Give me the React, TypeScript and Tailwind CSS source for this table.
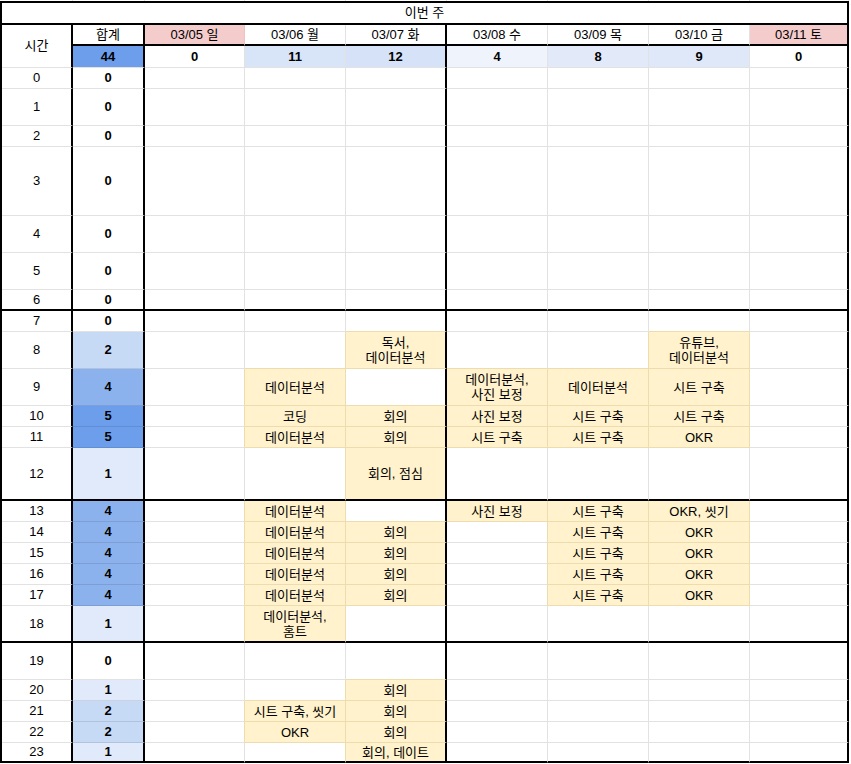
import React from 'react';

type Row = {
  h: string;
  label: string;
  total: number;
  cells: (string | null)[];
  thick?: boolean;
};

const E: (string | null)[] = [null, null, null, null, null, null, null];
const W14 = [null, '데이터분석', '회의', null, '시트 구축', 'OKR', null];

const rows: Row[] = [
  { h: 'h-[21px]', label: '0', total: 0, cells: E },
  { h: 'h-[37px]', label: '1', total: 0, cells: E },
  { h: 'h-[21px]', label: '2', total: 0, cells: E },
  { h: 'h-[69px]', label: '3', total: 0, cells: E },
  { h: 'h-[37px]', label: '4', total: 0, cells: E },
  { h: 'h-[37px]', label: '5', total: 0, cells: E },
  { h: 'h-[21px]', label: '6', total: 0, cells: E, thick: true },
  { h: 'h-[21px]', label: '7', total: 0, cells: E },
  { h: 'h-[37px]', label: '8', total: 2, cells: [null, null, '독서,\n데이터분석', null, null, '유튜브,\n데이터분석', null] },
  { h: 'h-[37px]', label: '9', total: 4, cells: [null, '데이터분석', null, '데이터분석,\n사진 보정', '데이터분석', '시트 구축', null] },
  { h: 'h-[21px]', label: '10', total: 5, cells: [null, '코딩', '회의', '사진 보정', '시트 구축', '시트 구축', null] },
  { h: 'h-[21px]', label: '11', total: 5, cells: [null, '데이터분석', '회의', '시트 구축', '시트 구축', 'OKR', null] },
  { h: 'h-[53px]', label: '12', total: 1, cells: [null, null, '회의, 점심', null, null, null, null], thick: true },
  { h: 'h-[21px]', label: '13', total: 4, cells: [null, '데이터분석', null, '사진 보정', '시트 구축', 'OKR, 씻기', null] },
  { h: 'h-[21px]', label: '14', total: 4, cells: W14 },
  { h: 'h-[21px]', label: '15', total: 4, cells: W14 },
  { h: 'h-[21px]', label: '16', total: 4, cells: W14 },
  { h: 'h-[21px]', label: '17', total: 4, cells: W14 },
  { h: 'h-[37px]', label: '18', total: 1, cells: [null, '데이터분석,\n홈트', null, null, null, null, null], thick: true },
  { h: 'h-[37px]', label: '19', total: 0, cells: E },
  { h: 'h-[21px]', label: '20', total: 1, cells: [null, null, '회의', null, null, null, null] },
  { h: 'h-[21px]', label: '21', total: 2, cells: [null, '시트 구축, 씻기', '회의', null, null, null, null] },
  { h: 'h-[21px]', label: '22', total: 2, cells: [null, 'OKR', '회의', null, null, null, null] },
  { h: 'h-[20px]', label: '23', total: 1, cells: [null, null, '회의, 데이트', null, null, null, null], thick: true },
];

const dayW = ['w-[100px]', 'w-[101px]', 'w-[101px]', 'w-[101px]', 'w-[101px]', 'w-[101px]', 'w-[99px]'];

const days = [
  { label: '03/05 일', total: 0, bg: 'bg-[#f4cccc]', tbg: 'bg-white' },
  { label: '03/06 월', total: 11, bg: 'bg-white', tbg: 'bg-[#d8e4f8]' },
  { label: '03/07 화', total: 12, bg: 'bg-white', tbg: 'bg-[#d5e2f7]' },
  { label: '03/08 수', total: 4, bg: 'bg-white', tbg: 'bg-[#eef3fc]' },
  { label: '03/09 목', total: 8, bg: 'bg-white', tbg: 'bg-[#e2eafa]' },
  { label: '03/10 금', total: 9, bg: 'bg-white', tbg: 'bg-[#dee8f9]' },
  { label: '03/11 토', total: 0, bg: 'bg-[#f4cccc]', tbg: 'bg-white' },
];

const totalBg: Record<number, string> = {
  0: 'bg-white',
  1: 'bg-[#e1eafa]',
  2: 'bg-[#c6d9f5]',
  4: 'bg-[#8cb2ee]',
  5: 'bg-[#6d9eeb]',
};

const cellBase = 'shrink-0 flex items-center justify-center text-center';

function dayRight(i: number, yellow: boolean, nextYellow: boolean) {
  if (i === 2 || i === 6) return 'border-r-2 border-r-black';
  if (yellow || nextYellow) return 'border-r border-r-[#ecdcae]';
  return 'border-r border-r-[#e2e2e2]';
}

function dayBottom(thick: boolean | undefined, yellow: boolean, belowYellow: boolean) {
  if (thick) return 'border-b-2 border-b-black';
  if (yellow || belowYellow) return 'border-b border-b-[#ecdcae]';
  return 'border-b border-b-[#e2e2e2]';
}

export default function App() {
  return (
    <div className="w-[851px] h-[764px] bg-white text-black text-[13px] font-['Liberation_Sans','Noto_Sans_CJK_KR',sans-serif] overflow-hidden">
      {/* 1px strip of the row above */}
      <div className="flex h-px pl-[2px]">
        <div className="w-[71px] shrink-0 border-r border-r-[#e2e2e2]" />
        <div className="w-[72px] shrink-0 border-r border-r-[#e2e2e2]" />
        {dayW.map((w, i) => (
          <div key={i} className={`${w} shrink-0 border-r border-r-[#e2e2e2]`} />
        ))}
      </div>
      <div className="w-[849px] border-l-2 border-t-2 border-black">
        {/* title */}
        <div className="h-[22px] flex items-center justify-center border-b-2 border-r-2 border-black">
          이번 주
        </div>
        {/* header block */}
        <div className="flex">
          <div className={`${cellBase} w-[71px] h-[43px] border-r-2 border-r-black border-b border-b-[#e2e2e2]`}>
            시간
          </div>
          <div className="flex flex-col">
            <div className="flex h-[21px]">
              <div className={`${cellBase} w-[72px] border-r-2 border-r-black border-b-2 border-b-black`}>합계</div>
              {days.map((d, i) => (
                <div
                  key={i}
                  className={`${cellBase} ${dayW[i]} ${d.bg} border-b-2 border-b-black ${
                    i === 2 || i === 6
                      ? 'border-r-2 border-r-black'
                      : i === 0
                      ? 'border-r border-r-[#ecc4c4]'
                      : 'border-r border-r-[#e2e2e2]'
                  }`}
                >
                  {d.label}
                </div>
              ))}
            </div>
            <div className="flex h-[22px] font-bold">
              <div className={`${cellBase} w-[72px] bg-[#6d9eeb] border-r-2 border-r-black border-b border-b-[#e2e2e2]`}>44</div>
              {days.map((d, i) => (
                <div
                  key={i}
                  className={`${cellBase} ${dayW[i]} ${d.tbg} border-b border-b-[#e2e2e2] ${
                    i === 2 || i === 6 ? 'border-r-2 border-r-black' : 'border-r border-r-[#e2e2e2]'
                  }`}
                >
                  {d.total}
                </div>
              ))}
            </div>
          </div>
        </div>
        {/* hour rows */}
        {rows.map((r, ri) => {
          const below = rows[ri + 1];
          return (
            <div key={r.label} className={`flex ${r.h}`}>
              <div
                className={`${cellBase} w-[71px] border-r-2 border-r-black ${
                  r.thick ? 'border-b-2 border-b-black' : 'border-b border-b-[#e2e2e2]'
                }`}
              >
                {r.label}
              </div>
              <div
                className={`${cellBase} w-[72px] font-bold ${totalBg[r.total]} border-r-2 border-r-black ${
                  r.thick
                    ? 'border-b-2 border-b-black'
                    : r.total > 0
                    ? 'border-b border-b-black/10'
                    : 'border-b border-b-[#e2e2e2]'
                }`}
              >
                {r.total}
              </div>
              {r.cells.map((c, ci) => {
                const yellow = c !== null;
                const nextYellow = ci < 6 && r.cells[ci + 1] !== null;
                const belowYellow = !!below && below.cells[ci] !== null;
                return (
                  <div
                    key={ci}
                    className={`${cellBase} ${dayW[ci]} ${yellow ? 'bg-[#fff2cc]' : 'bg-white'} ${dayRight(
                      ci,
                      yellow,
                      nextYellow
                    )} ${dayBottom(r.thick, yellow, belowYellow)} whitespace-pre-line leading-[15px]`}
                  >
                    {c}
                  </div>
                );
              })}
            </div>
          );
        })}
      </div>
    </div>
  );
}
